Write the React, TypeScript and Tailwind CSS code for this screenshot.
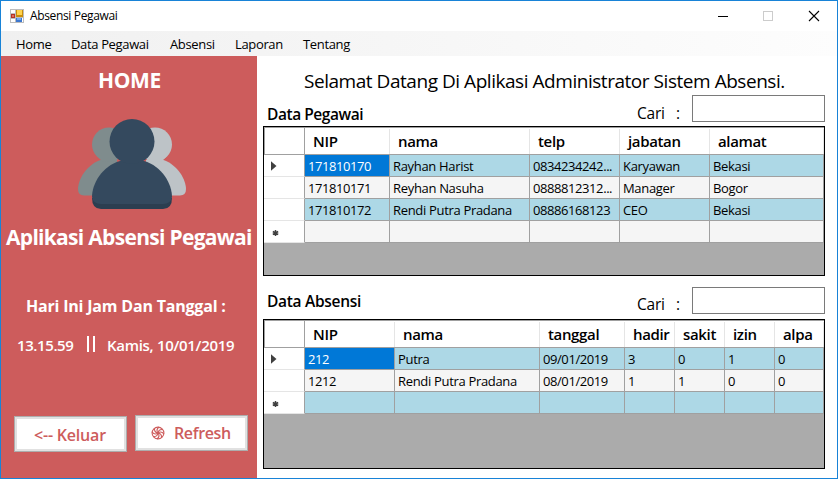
import type { ReactNode } from "react";

type Grid = {
  cols: string;
  height: string;
  headers: string[];
  rows: string[][];
  emptyBg: string;
};

const pegawai: Grid = {
  cols: "grid-cols-[41px_85px_140px_90px_90px_114px]",
  height: "h-[150px]",
  headers: ["NIP", "nama", "telp", "jabatan", "alamat"],
  rows: [
    ["171810170", "Rayhan Harist", "0834234242...", "Karyawan", "Bekasi"],
    ["171810171", "Reyhan Nasuha", "0888812312...", "Manager", "Bogor"],
    ["171810172", "Rendi Putra Pradana", "08886168123", "CEO", "Bekasi"],
  ],
  emptyBg: "bg-[#f5f5f5]",
};

const absensi: Grid = {
  cols: "grid-cols-[41px_90px_145px_85px_50px_50px_50px_49px]",
  height: "h-[150px]",
  headers: ["NIP", "nama", "tanggal", "hadir", "sakit", "izin", "alpa"],
  rows: [
    ["212", "Putra", "09/01/2019", "3", "0", "1", "0"],
    ["1212", "Rendi Putra Pradana", "08/01/2019", "1", "1", "0", "0"],
  ],
  emptyBg: "bg-[#add8e6]",
};

function RowHeader({ children }: { children?: ReactNode }) {
  return (
    <div className="flex h-[22px] items-center border-r border-b border-r-[#a0a0a0] border-b-[#e5e5e5] bg-white pl-[7px]">
      {children}
    </div>
  );
}

function DataGrid({ grid }: { grid: Grid }) {
  return (
    <div className={`w-[562px] overflow-hidden border border-black bg-[#ababab] ${grid.height}`}>
      <div className={`grid border-t border-[#a0a0a0] ${grid.cols}`}>
        <div className="h-[27px] border-x border-b border-[#a0a0a0] bg-white" />
        {grid.headers.map((h) => (
          <div key={h} className="flex h-[27px] border-b border-[#a0a0a0] bg-white pt-px">
            <div className="min-w-0 flex-1 pl-[8px] text-[15px] leading-[25px] font-semibold tracking-[-0.35px] whitespace-nowrap">
              {h}
            </div>
            <div className="w-px bg-[#e5e5e5]" />
          </div>
        ))}
        {grid.rows.map((row, r) => [
          <RowHeader key={`h${r}`}>
            {r === 0 && (
              <svg width="6" height="10" viewBox="0 0 6 10">
                <path d="M0 0.300L5.500 5L0 9.700Z" fill="#404040" />
              </svg>
            )}
          </RowHeader>,
          ...row.map((cell, c) => (
            <div
              key={`${r}-${c}`}
              className={`h-[22px] overflow-hidden border-r border-b border-[#a0a0a0] pl-[3px] text-[13px] leading-[23px] whitespace-nowrap ${
                /^\d/.test(cell) ? "tracking-[-0.42px]" : "tracking-[-0.32px]"
              } ${
                r === 0 && c === 0 ? "bg-[#0078d7] text-white" : r % 2 === 0 ? "bg-[#add8e6]" : "bg-[#f5f5f5]"
              }`}
            >
              {cell}
            </div>
          )),
        ])}
        <RowHeader>
          <svg width="10" height="8" viewBox="0 0 10 8" className="mt-0.5">
            <path d="M4.500 1V7M1.800 2.500L7.200 5.500M7.200 2.500L1.800 5.500" stroke="#404040" strokeWidth="1.5" />
          </svg>
        </RowHeader>
        {grid.headers.map((h) => (
          <div key={`e${h}`} className={`h-[22px] border-r border-b border-[#a0a0a0] ${grid.emptyBg}`} />
        ))}
      </div>
    </div>
  );
}

function Search({ textTop }: { textTop: string }) {
  return (
    <div className="flex">
      <span className={`w-[39px] text-[15.5px] leading-[22px] tracking-[-0.2px] ${textTop}`}>Cari</span>
      <span className={`w-4 text-[15.5px] leading-[22px] ${textTop}`}>:</span>
      <div className="h-[27px] w-[133px] border border-[#7a7a7a] bg-white" />
    </div>
  );
}

function UsersIcon() {
  return (
    <svg width="110" height="92" viewBox="0 0 110 92" className="mt-[24px] ml-[76px]">
      <circle cx="32" cy="25.500" r="17" fill="#7f8c8d" />
      <path d="M40 41H23.500C9 46 1 61 1 70Q1 76.500 7 76.500H40Z" fill="#7f8c8d" />
      <path d="M25 42L21 38H40V43Z" fill="#7f8c8d" />
      <circle cx="78" cy="25.500" r="17" fill="#bdc3c7" />
      <path d="M69 41H86.500C101 46 109 61 109 70Q109 76.500 103 76.500H69Z" fill="#bdc3c7" />
      <path d="M85 42L89 38H70V43Z" fill="#bdc3c7" />
      <path d="M15 79Q15 90 24 90H86Q95 90 95 79Z" fill="#2c3e50" />
      <path d="M43 42H67C85 47 95 65 95 78Q94 85 86 85H24Q16 85 15 78C15 65 25 47 43 42Z" fill="#34495e" />
      <circle cx="55" cy="22.500" r="22.500" fill="#34495e" />
    </svg>
  );
}

function Sidebar() {
  return (
    <aside className="h-[422px] w-[256px] bg-[#cd5c5c] text-white">
      <h1 className="pt-[10px] pl-[97px] text-[21px] leading-[29px] font-bold tracking-[-0.4px]">HOME</h1>
      <UsersIcon />
      <h2 className="mt-[11px] pl-[5px] text-[21px] leading-[30px] font-bold tracking-[-0.7px] whitespace-nowrap">
        Aplikasi Absensi Pegawai
      </h2>
      <p className="mt-[43px] pl-[25px] text-[16px] leading-[22px] font-bold tracking-[-0.2px]">
        Hari Ini Jam Dan Tanggal :
      </p>
      <div className="mt-[16px] flex pl-4 text-[15px] leading-[24px] font-semibold tracking-[-0.4px]">
        <span className="w-[70px]">13.15.59</span>
        <span className="flex w-[20px] gap-[4px] pt-[3px]">
          <i className="h-[16px] w-[2px] bg-white" />
          <i className="h-[16px] w-[2px] bg-white" />
        </span>
        <span className="tracking-[-0.3px] whitespace-nowrap">Kamis, 10/01/2019</span>
      </div>
      <div className="mt-[58px] flex gap-2 pl-[13px] text-[16px] font-semibold tracking-[-0.2px] text-[#cd5c5c]">
        <button className="mt-px h-[36px] w-[113px] border border-[#adadad] bg-white text-left">
          <span className="block h-full border-2 border-[#e1e1e1] pl-[17px] leading-[32px]">&lt;-- Keluar</span>
        </button>
        <button className="h-[36px] w-[113px] border border-[#adadad] bg-white text-left">
          <span className="flex h-full items-center border-2 border-[#e1e1e1] pl-[13px] leading-[31px]">
            <svg width="14" height="14" viewBox="-7 -7 14 14" fill="none" stroke="#cd5c5c" strokeWidth="1.1">
              <circle r="5.900" />
              {[0, 45, 90, 135, 180, 225, 270, 315].map((a) => (
                <path key={a} d="M0 0Q0.500 -4 5 -3.500" transform={`rotate(${a})`} />
              ))}
            </svg>
            <span className="ml-[9px] pt-px tracking-[-0.35px]">Refresh</span>
          </span>
        </button>
      </div>
    </aside>
  );
}

function FormIcon() {
  return (
    <svg width="14" height="14" viewBox="0 0 14 14" shapeRendering="crispEdges">
      <rect width="14" height="14" fill="#bdbdbd" />
      <rect x="1" y="1" width="4" height="3" fill="#fff" />
      <rect x="1" y="10" width="4" height="3" fill="#fff" />
      <rect x="12" y="9" width="1" height="4" fill="#fff" />
      <rect x="1" y="5" width="4" height="4" fill="#b33226" />
      <rect x="2" y="6" width="2" height="2" fill="#e36c5a" />
      <rect x="6" y="1" width="7" height="7" fill="#c98d0b" />
      <rect x="7" y="1" width="5" height="5" fill="#ffd34d" />
      <rect x="6" y="9" width="6" height="4" fill="#3c77cf" />
      <rect x="7" y="9" width="4" height="2" fill="#77a9f0" />
    </svg>
  );
}

export default function App() {
  return (
    <div className="h-[479px] w-[838px] overflow-hidden border border-[#1883d7] bg-white font-['Open_Sans','Noto_Sans',sans-serif] text-black">
      <header className="flex h-[30px] items-center pl-[9px]">
        <FormIcon />
        <span className="ml-[6px] text-[12px] tracking-[-0.35px]">Absensi Pegawai</span>
        <svg width="102" height="12" viewBox="0 0 102 12" className="mr-[17px] ml-auto" fill="none">
          <path d="M0 6.500H10" stroke="#000" />
          <rect x="45.500" y="1.500" width="9" height="9" stroke="#ccc" />
          <path d="M91 1L101 11M101 1L91 11" stroke="#000" strokeWidth="1.100" />
        </svg>
      </header>
      <nav className="flex h-[25px] bg-linear-to-r from-[#f0f0f0] to-[#fdfdfd] pl-[15px] text-[13px] leading-[26px] tracking-[-0.35px] whitespace-nowrap">
        <span className="w-[55px]">Home</span>
        <span className="w-[99px]">Data Pegawai</span>
        <span className="w-[65px]">Absensi</span>
        <span className="w-[68px]">Laporan</span>
        <span>Tentang</span>
      </nav>
      <div className="flex">
        <Sidebar />
        <main className="flex w-[568px] flex-col pl-[6px]">
          <div className="h-[39px] pt-[11px] pl-[41px] text-[19px] leading-[28px] tracking-[-0.46px] whitespace-nowrap">
            Selamat Datang Di Aplikasi Administrator Sistem Absensi.
          </div>
          <div className="flex h-[31px] justify-between pl-[4px]">
            <h3 className="pt-[8px] text-[15.5px] leading-[22px] font-semibold tracking-[-0.45px]">Data Pegawai</h3>
            <Search textTop="pt-[7px]" />
          </div>
          <DataGrid grid={pegawai} />
          <div className="mt-[11px] flex h-[32px] justify-between pl-[4px]">
            <h3 className="pt-[3px] text-[15.5px] leading-[22px] font-semibold tracking-[-0.3px]">Data Absensi</h3>
            <Search textTop="pt-[6px]" />
          </div>
          <DataGrid grid={absensi} />
        </main>
      </div>
    </div>
  );
}
